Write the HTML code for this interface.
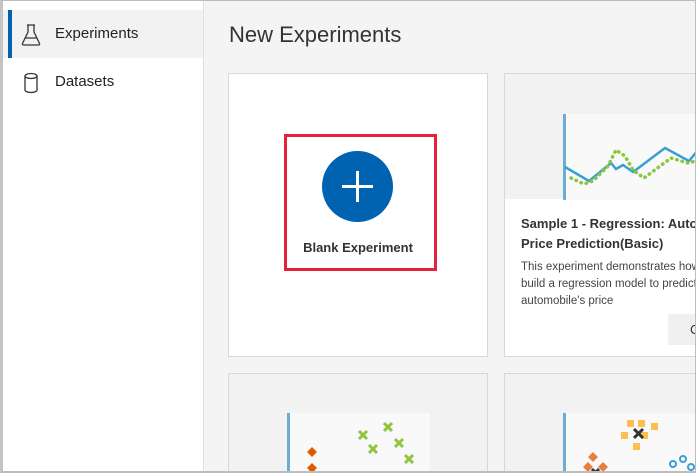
<!DOCTYPE html>
<html><head><meta charset="utf-8"><style>
*{margin:0;padding:0;box-sizing:border-box}
html,body{width:696px;height:473px;overflow:hidden;background:#f4f4f4;font-family:"Liberation Sans",sans-serif}
#wrap{position:relative;width:696px;height:473px;overflow:hidden;background:#f4f4f4}
.frame{position:absolute;left:0;top:0;width:696px;height:473px;border-top:1px solid #bdbdbd;border-left:3px solid #c4c4c4;border-right:1px solid #bdbdbd;border-bottom:2px solid #bdbdbd;z-index:10;pointer-events:none}
.side{position:absolute;left:0;top:0;width:204px;height:473px;background:#fff;border-right:1px solid #e0e0e0}
.item{position:absolute;left:3px;width:200px;height:48px;font-size:15px;color:#222;line-height:48px;padding-left:52px}
.item.sel{background:#f2f2f2}
.item.sel:before{content:"";position:absolute;left:5px;top:0;width:4px;height:48px;background:#0063b1}
.item svg{position:absolute;left:18px;top:14px}
h1{position:absolute;left:229px;top:22px;font-size:22px;font-weight:normal;color:#333}
.card{position:absolute;background:#fff;border:1px solid #d8d8d8}
.img{position:absolute;left:0;top:0;right:0;height:125px;background:#f2f2f2}
.panel{position:absolute;background:#f9f9f9}
.axis{position:absolute;left:0;top:0;bottom:0;width:3px;background:#6aaed6}
</style></head><body><div id="wrap">
<div class="side">
 <div class="item sel" style="top:10px"><svg width="20" height="22" viewBox="0 0 20 22" fill="none" stroke="#333" stroke-width="1.3"><path d="M6 1h8M7 1v7L1.5 19.5a1 1 0 0 0 1 1.5h15a1 1 0 0 0 1-1.5L13 8V1M4 14h12"/></svg>Experiments</div>
 <div class="item" style="top:58px"><svg width="20" height="22" viewBox="0 0 20 22" fill="none" stroke="#333" stroke-width="1.3"><ellipse cx="10" cy="4" rx="6" ry="2.5"/><path d="M4 4v14c0 1.4 2.7 2.5 6 2.5s6-1.1 6-2.5V4"/></svg>Datasets</div>
</div>
<h1>New Experiments</h1>
<div class="card" style="left:228px;top:73px;width:260px;height:284px">
 <div style="position:absolute;left:55px;top:60px;width:153px;height:137px;border:3px solid #e8213a"></div>
 <div style="position:absolute;left:93px;top:77px;width:71px;height:71px;border-radius:50%;background:#0063b1"></div>
 <div style="position:absolute;left:113px;top:111px;width:31px;height:2.5px;background:#fff"></div>
 <div style="position:absolute;left:127px;top:97px;width:2.5px;height:31px;background:#fff"></div>
 <div style="position:absolute;left:0;width:258px;top:166px;text-align:center;font-size:13px;font-weight:bold;color:#333">Blank Experiment</div>
</div>
<div class="card" style="left:504px;top:73px;width:200px;height:284px;overflow:hidden">
 <div class="img"></div>
 <div class="panel" style="left:58px;top:40px;width:140px;height:86px"><div class="axis"></div>
  <svg width="140" height="86" style="position:absolute;left:0;top:0"><polyline points="2,53 26,67 48,49 53,55 60,51 70,58 102,34 126,47 140,30" fill="none" stroke="#3a9fd3" stroke-width="2.5"/><polyline points="8,64 21,70 30,67 45,52 53,36 62,42 70,56 81,64 108,44 125,49 140,45" fill="none" stroke="#8cc63f" stroke-width="3.5" stroke-dasharray="0.5 5" stroke-linecap="round"/></svg>
 </div>
 <div style="position:absolute;left:16px;top:140px;font-size:13px;font-weight:bold;color:#333;line-height:20px;white-space:nowrap">Sample 1 - Regression: Automobile<br>Price Prediction(Basic)</div>
 <div style="position:absolute;left:16px;top:185px;font-size:11.5px;color:#444;line-height:17px;white-space:nowrap">This experiment demonstrates how to<br>build a regression model to predict<br>automobile's price</div>
 <div style="position:absolute;left:163px;top:240px;width:60px;height:31px;background:#f0f0f0;font-size:13px;color:#333;line-height:31px;padding-left:22px">C</div>
</div>
<div class="card" style="left:228px;top:373px;width:260px;height:120px;background:#f2f2f2">
 <div class="panel" style="left:58px;top:39px;width:143px;height:80px"><div class="axis"></div>
  <svg width="143" height="80" style="position:absolute;left:0;top:0" stroke="#8cc63f" stroke-width="3"><path d="M72 18l8 8M80 18l-8 8M97 10l8 8M105 10l-8 8M82 32l8 8M90 32l-8 8M108 26l8 8M116 26l-8 8M118 42l8 8M126 42l-8 8"/><path d="M25 34l5 5-5 5-5-5zM25 50l5 5-5 5-5-5z" fill="#e05a00" stroke="none"/></svg>
 </div>
</div>
<div class="card" style="left:504px;top:373px;width:200px;height:120px;background:#f2f2f2">
 <div class="panel" style="left:58px;top:39px;width:140px;height:80px"><div class="axis"></div>
  <svg width="140" height="80" style="position:absolute;left:0;top:0"><g fill="#fbc04e"><rect x="64" y="7" width="7" height="7"/><rect x="75" y="7" width="7" height="7"/><rect x="88" y="10" width="7" height="7"/><rect x="58" y="19" width="7" height="7"/><rect x="78" y="19" width="7" height="7"/><rect x="70" y="30" width="7" height="7"/></g><path d="M71 16l9 9M80 16l-9 9" stroke="#333" stroke-width="3"/><path d="M30 39l5 5-5 5-5-5zM25 49l5 5-5 5-5-5zM40 49l5 5-5 5-5-5z" fill="#e8803a"/><path d="M29 56l7 7M36 56l-7 7" stroke="#333" stroke-width="3"/><g fill="none" stroke="#3a9fd3" stroke-width="2"><circle cx="120" cy="46" r="3"/><circle cx="110" cy="51" r="3"/><circle cx="128" cy="54" r="3"/></g></svg>
 </div>
</div>
<div class="frame"></div>
</div></body></html>
